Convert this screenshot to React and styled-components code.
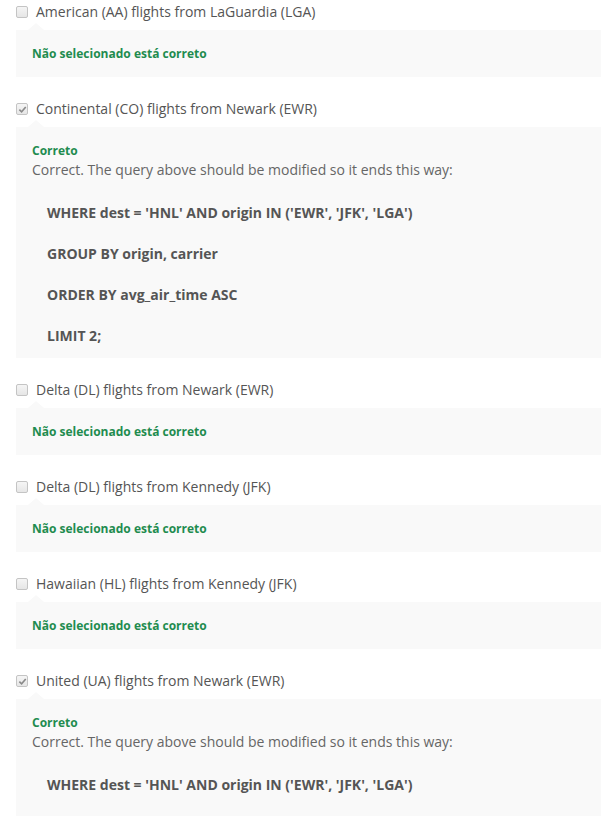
import React from "react";
import styled, { createGlobalStyle } from "styled-components";

const Global = createGlobalStyle`
  html, body { margin: 0; padding: 0; background: #fff; }
  body { font-family: "Open Sans", "Liberation Sans", sans-serif; }
`;

const List = styled.div`
  padding: 2px 0 0 16px;
  width: 585px;
`;

const Item = styled.div`
  margin-bottom: 22px;
`;

const Row = styled.label`
  display: flex;
  align-items: center;
  height: 20px;
  font-size: 14px;
  line-height: 20px;
  color: #555;
`;

const Box = styled.span`
  width: 12px;
  height: 12px;
  box-sizing: border-box;
  border: 1px solid #c4c4c4;
  border-radius: 2px;
  background: linear-gradient(#f5f5f5, #e6e6e6);
  margin-right: 8px;
  display: flex;
  align-items: center;
  justify-content: center;
`;

const Panel = styled.div`
  position: relative;
  margin-top: 8px;
  background: #f9f9f9;
  padding: 15px 16px ${(p) => (p.$long ? "12px" : "14px")} 16px;
  &::before {
    content: "";
    position: absolute;
    left: 12px;
    top: -7px;
    border-left: 8px solid transparent;
    border-right: 8px solid transparent;
    border-bottom: 7px solid #f9f9f9;
  }
`;

const Status = styled.div`
  font-size: 12px;
  font-weight: 700;
  line-height: 18px;
  color: #1f8c4f;
`;

const Explain = styled.div`
  font-size: 14px;
  line-height: 20px;
  color: #666;
`;

const Code = styled.div`
  padding: 2px 0 0 15px;
`;

const CodeLine = styled.p`
  margin: 21px 0 0;
  font-size: 14px;
  line-height: 20px;
  font-weight: 700;
  color: #555;
`;

const Check = () => (
  <svg width="9" height="9" viewBox="0 0 10 10">
    <path d="M1.5 5.2 L4 7.6 L8.6 2.2" fill="none" stroke="#8a8a8a" strokeWidth="1.8" />
  </svg>
);

const code = [
  "WHERE dest = 'HNL' AND origin IN ('EWR', 'JFK', 'LGA')",
  "GROUP BY origin, carrier",
  "ORDER BY avg_air_time ASC",
  "LIMIT 2;",
];

const items = [
  { label: "American (AA) flights from LaGuardia (LGA)", checked: false },
  { label: "Continental (CO) flights from Newark (EWR)", checked: true },
  { label: "Delta (DL) flights from Newark (EWR)", checked: false },
  { label: "Delta (DL) flights from Kennedy (JFK)", checked: false },
  { label: "Hawaiian (HL) flights from Kennedy (JFK)", checked: false },
  { label: "United (UA) flights from Newark (EWR)", checked: true },
];

export default function App() {
  return (
    <>
      <Global />
      <List>
        {items.map((it) => (
          <Item key={it.label}>
            <Row>
              <Box>{it.checked && <Check />}</Box>
              {it.label}
            </Row>
            <Panel $long={it.checked}>
              {it.checked ? (
                <>
                  <Status>Correto</Status>
                  <Explain>Correct. The query above should be modified so it ends this way:</Explain>
                  <Code>
                    {code.map((c) => (
                      <CodeLine key={c}>{c}</CodeLine>
                    ))}
                  </Code>
                </>
              ) : (
                <Status>Não selecionado está correto</Status>
              )}
            </Panel>
          </Item>
        ))}
      </List>
    </>
  );
}
